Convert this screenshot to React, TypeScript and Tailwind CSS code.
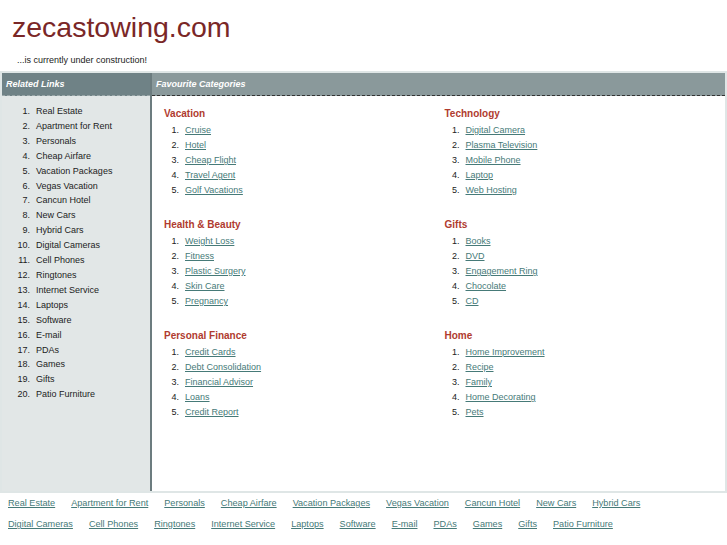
const related = [
  "Real Estate",
  "Apartment for Rent",
  "Personals",
  "Cheap Airfare",
  "Vacation Packages",
  "Vegas Vacation",
  "Cancun Hotel",
  "New Cars",
  "Hybrid Cars",
  "Digital Cameras",
  "Cell Phones",
  "Ringtones",
  "Internet Service",
  "Laptops",
  "Software",
  "E-mail",
  "PDAs",
  "Games",
  "Gifts",
  "Patio Furniture",
]

const categories: [string, string[]][][] = [
  [
    ["Vacation", ["Cruise", "Hotel", "Cheap Flight", "Travel Agent", "Golf Vacations"]],
    ["Health & Beauty", ["Weight Loss", "Fitness", "Plastic Surgery", "Skin Care", "Pregnancy"]],
    ["Personal Finance", ["Credit Cards", "Debt Consolidation", "Financial Advisor", "Loans", "Credit Report"]],
  ],
  [
    ["Technology", ["Digital Camera", "Plasma Television", "Mobile Phone", "Laptop", "Web Hosting"]],
    ["Gifts", ["Books", "DVD", "Engagement Ring", "Chocolate", "CD"]],
    ["Home", ["Home Improvement", "Recipe", "Family", "Home Decorating", "Pets"]],
  ],
]

function Category({ title, items }: { title: string; items: string[] }) {
  return (
    <div className="mb-[19px]">
      <h2 className="mb-[2px] text-[10px] font-bold leading-[15px] text-[#b03b2f]">{title}</h2>
      <ol>
        {items.map((item, i) => (
          <li key={item} className="flex text-[9px] leading-[15px] text-[#222]">
            <span className="w-[15px] text-right">{i + 1}.</span>
            <a href="#" className="ml-[6px] text-[#467a78] underline">
              {item}
            </a>
          </li>
        ))}
      </ol>
    </div>
  )
}

export default function App() {
  return (
    <div className="min-h-[545px] bg-white font-['Liberation_Sans',Arial,sans-serif]">
      <h1 className="pl-[12px] pt-[13px] text-[28.5px] leading-[28px] text-[#7a2727]">zecastowing.com</h1>
      <p className="mt-[14px] pl-[17px] text-[9px] leading-[11px] text-[#222]">...is currently under construction!</p>

      <div className="mt-[5px] flex min-h-[422px] border-2 border-[#dfe6e6]">
        <div className="w-[150px] shrink-0 border-r-2 border-[#6c7c7f] bg-[#e2e7e7]">
          <div className="h-[23px] border-b border-dashed border-[#9aa7a9] bg-[#6f8286] px-[4px] text-[9px] font-bold italic leading-[22px] text-white">
            Related Links
          </div>
          <ol className="pt-[8px]">
            {related.map((item, i) => (
              <li key={item} className="flex text-[9px] leading-[14.9px] text-[#1c1c1c]">
                <span className="w-[28px] text-right">{i + 1}.</span>
                <span className="ml-[6px]">{item}</span>
              </li>
            ))}
          </ol>
        </div>

        <div className="flex-1">
          <div className="h-[23px] border-b border-dashed border-[#333] bg-[#8a999b] px-[4px] text-[9px] font-bold italic leading-[22px] text-white">
            Favourite Categories
          </div>
          <div className="grid grid-cols-2 pl-[12px] pt-[10px]">
            {categories.map((col, c) => (
              <div key={c}>
                {col.map(([title, items]) => (
                  <Category key={title} title={title} items={items} />
                ))}
              </div>
            ))}
          </div>
        </div>
      </div>

      <div className="flex flex-wrap gap-x-[16px] pl-[8px] pr-[8px] text-[9.15px] leading-[21px]">
        {related.map((item) => (
          <a key={item} href="#" className="text-[#467a78] underline">
            {item}
          </a>
        ))}
      </div>
    </div>
  )
}
